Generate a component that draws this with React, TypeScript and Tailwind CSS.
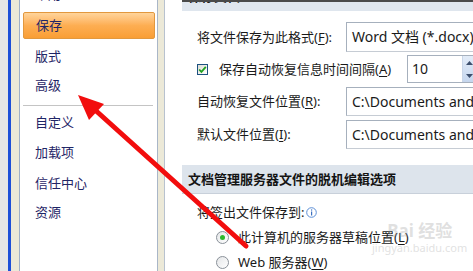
import React from "react";

const F = { fontFamily: '"Noto Sans", "Noto Sans CJK SC", sans-serif' };

function U({ c }: { c: string }) {
  return <span className="underline underline-offset-2">{c}</span>;
}

function SideItem({ label, selected }: { label: string; selected?: boolean }) {
  return (
    <div
      className={
        "h-[27px] flex items-center pl-[12px] text-[13px] leading-none text-[#1f2566] " +
        (selected
          ? "rounded-[2px] border border-[#e2983e] bg-gradient-to-b from-[#ffd49a] via-[#fdae52] to-[#f99e34]"
          : "")
      }
    >
      {label}
    </div>
  );
}

function Box({ children, w = "w-[150px]" }: { children: React.ReactNode; w?: string }) {
  return (
    <div
      className={
        w +
        " h-full shrink-0 border border-[#a6b0bd] border-b-[#c6ccd4] bg-white flex items-center pl-[5px] text-[14px] leading-none text-[#1a1a1a] whitespace-nowrap overflow-hidden"
      }
    >
      {children}
    </div>
  );
}

function Radio({ checked }: { checked?: boolean }) {
  return (
    <div className="w-[13px] h-[13px] rounded-full border border-[#8a9199] bg-gradient-to-br from-[#e4e6e8] to-[#ffffff] flex items-center justify-center shrink-0">
      {checked && <div className="w-[5px] h-[5px] rounded-full bg-[#2eb82e]" />}
    </div>
  );
}

export default function App() {
  return (
    <div className="relative w-[473px] h-[271px] overflow-hidden bg-white flex" style={F}>
      {/* left window frame */}
      <div className="w-[8px] bg-[#e6e6e6]" />
      <div className="w-[3px] bg-[#1d4fd8]" />
      <div className="w-[8px] bg-[#ece9d8]" />
      <div className="w-[1px] bg-[#9fb0c8]" />

      {/* sidebar */}
      <div className="w-[137px] bg-white flex flex-col pl-[3px] pr-[2px]">
        <div className="-mt-[19px]">
          <SideItem label="常用" />
        </div>
        <div className="mt-[4px]">
          <SideItem label="保存" selected />
        </div>
        <div className="mt-[4px]">
          <SideItem label="版式" />
        </div>
        <div className="mt-[2px]">
          <SideItem label="高级" />
        </div>
        <div className="mt-[6px] mr-[2px] h-[2px] border-t border-[#c4c4c4] border-b border-b-white" />
        <div className="mt-[2px]">
          <SideItem label="自定义" />
        </div>
        <div className="mt-[3px]">
          <SideItem label="加载项" />
        </div>
        <div className="mt-[4px]">
          <SideItem label="信任中心" />
        </div>
        <div className="mt-[2px]">
          <SideItem label="资源" />
        </div>
      </div>

      {/* splitter strip */}
      <div className="w-[1px] bg-[#a9b6c8]" />
      <div className="w-[6px] bg-[#ece9d8]" />
      <div className="w-[1px] bg-[#b8c2cf]" />

      {/* content */}
      <div className="flex-1 min-w-0 flex flex-col overflow-hidden text-[13px] text-[#1a1a1a]">
        <div className="ml-[17px] h-[11px] border-t-2 border-[#4a4a4a] bg-[#dfe6ee] overflow-hidden relative shrink-0">
          <div className="absolute left-[6px] -top-[12px] text-[13px] font-bold leading-none text-[#202020]">保存文档</div>
        </div>

        {/* row 1 */}
        <div className="mt-[11px] h-[30px] flex items-center pl-[32px] shrink-0">
          <div className="w-[149px] shrink-0 leading-none">
            将文件保存为此格式(<U c="F" />):
          </div>
          <Box w="w-[160px]">Word 文档 (*.docx)</Box>
        </div>

        {/* row 2 */}
        <div className="mt-[3px] h-[28px] flex items-center pl-[32px] shrink-0">
          <div className="w-[210px] shrink-0 flex items-center">
            <div className="w-[11px] h-[11px] border border-[#1c5180] bg-gradient-to-br from-[#dcdcd4] to-white flex items-center justify-center">
              <svg width="9" height="9" viewBox="0 0 9 9">
                <path d="M1.2 4.5 L3.4 6.8 L7.8 1.8" fill="none" stroke="#21a121" strokeWidth="1.8" />
              </svg>
            </div>
            <div className="ml-[11px] leading-none whitespace-nowrap">
              保存自动恢复信息时间间隔(<U c="A" />)
            </div>
          </div>
          <div className="w-[70px] h-full shrink-0 border border-[#a6b0bd] bg-white flex">
            <div className="flex-1 flex items-center pl-[4px] text-[14px] leading-none">10</div>
            <div className="w-[14px] h-full flex flex-col border-l border-[#c9d6e8] bg-gradient-to-b from-[#e3ecf8] to-[#c5d6ee]">
              <div className="flex-1 flex items-center justify-center">
                <svg width="7" height="4" viewBox="0 0 7 4"><path d="M0 4 L3.5 0 L7 4Z" fill="#3d4f6e" /></svg>
              </div>
              <div className="flex-1 flex items-center justify-center">
                <svg width="7" height="4" viewBox="0 0 7 4"><path d="M0 0 L3.5 4 L7 0Z" fill="#3d4f6e" /></svg>
              </div>
            </div>
          </div>
        </div>

        {/* row 3 */}
        <div className="mt-[4px] h-[29px] flex items-center pl-[32px] shrink-0">
          <div className="w-[149px] shrink-0 leading-none">
            自动恢复文件位置(<U c="R" />):
          </div>
          <Box w="w-[160px]">
            C:\Documents and <span className="text-[#e8b84a]">Settings</span>
          </Box>
        </div>

        {/* row 4 */}
        <div className="mt-[4px] h-[29px] flex items-center pl-[32px] shrink-0">
          <div className="w-[149px] shrink-0 leading-none">
            默认文件位置(<U c="I" />):
          </div>
          <Box w="w-[160px]">
            C:\Documents and <span className="text-[#e8b84a]">Settings</span>
          </Box>
        </div>

        {/* section header */}
        <div className="mt-[16px] ml-[17px] h-[29px] shrink-0 bg-[#dde4ec] border-b border-[#c8d0da] flex items-center pl-[6px] font-bold leading-none whitespace-nowrap text-[#141414]">
          文档管理服务器文件的脱机编辑选项
        </div>

        <div className="mt-[10px] h-[16px] shrink-0 flex items-center pl-[32px] leading-none">
          将签出文件保存到:
          <svg className="ml-[2px]" width="11" height="11" viewBox="0 0 11 11">
            <circle cx="5.5" cy="5.5" r="4.8" fill="white" stroke="#5b8ed6" strokeWidth="1" />
            <rect x="5" y="4.5" width="1.2" height="4" fill="#3a6fc0" />
            <rect x="5" y="2.4" width="1.2" height="1.2" fill="#3a6fc0" />
          </svg>
        </div>

        <div className="mt-[7px] h-[20px] shrink-0 flex items-center pl-[51px] leading-none whitespace-nowrap">
          <Radio checked />
          <span className="ml-[9px]">
            此计算机的服务器草稿位置(<U c="L" />)
          </span>
        </div>
        <div className="mt-[5px] h-[20px] shrink-0 flex items-center pl-[51px] leading-none whitespace-nowrap">
          <Radio />
          <span className="ml-[9px]">
            Web 服务器(<U c="W" />)
          </span>
        </div>
      </div>

      {/* watermark */}
      <div className="absolute left-[372px] top-[222px] flex flex-col items-center opacity-30 pointer-events-none">
        <div className="text-[17px] leading-none text-[#9a9a9a] font-bold">Bai 经验</div>
        <div className="text-[11px] leading-none text-[#a0a0a0] mt-[3px]">jingyan.baidu.com</div>
      </div>

      {/* red arrow */}
      <svg className="absolute left-0 top-0 pointer-events-none" width="473" height="271" viewBox="0 0 473 271">
        <line x1="246" y1="246" x2="94" y2="109" stroke="#f20d0d" strokeWidth="5" strokeLinecap="round" />
        <path d="M78 95 L104 104 L89 120 Z" fill="#f20d0d" />
      </svg>
    </div>
  );
}
